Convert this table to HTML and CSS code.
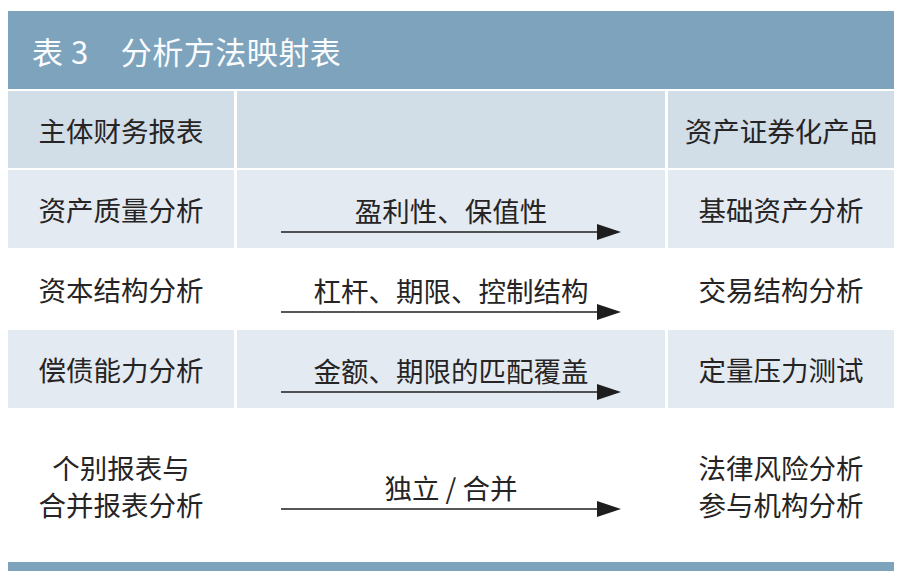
FILE: index.html
```html
<!DOCTYPE html>
<html lang="zh-CN">
<head>
<meta charset="utf-8">
<title>表 3 分析方法映射表</title>
<link rel="stylesheet" href="styles.css">
</head>
<body>
<div class="page">
  <div class="table">
    <div class="title"><span class="title-no">表 3</span><span class="title-name">分析方法映射表</span></div>

    <div class="row head">
      <div class="cell side">主体财务报表</div>
      <div class="cell mid"></div>
      <div class="cell side">资产证券化产品</div>
    </div>

    <div class="row tint">
      <div class="cell side">资产质量分析</div>
      <div class="cell mid">
        <span class="label">盈利性、保值性</span>
        <svg class="arrow" width="340" height="16" viewBox="0 0 340 16"><line x1="0" y1="8" x2="318" y2="8" stroke="#1e1e1e" stroke-width="1.5"/><polygon points="316,0 340,8 316,16" fill="#1e1e1e"/></svg>
      </div>
      <div class="cell side">基础资产分析</div>
    </div>

    <div class="row">
      <div class="cell side">资本结构分析</div>
      <div class="cell mid">
        <span class="label">杠杆、期限、控制结构</span>
        <svg class="arrow" width="340" height="16" viewBox="0 0 340 16"><line x1="0" y1="8" x2="318" y2="8" stroke="#1e1e1e" stroke-width="1.5"/><polygon points="316,0 340,8 316,16" fill="#1e1e1e"/></svg>
      </div>
      <div class="cell side">交易结构分析</div>
    </div>

    <div class="row tint">
      <div class="cell side">偿债能力分析</div>
      <div class="cell mid">
        <span class="label">金额、期限的匹配覆盖</span>
        <svg class="arrow" width="340" height="16" viewBox="0 0 340 16"><line x1="0" y1="8" x2="318" y2="8" stroke="#1e1e1e" stroke-width="1.5"/><polygon points="316,0 340,8 316,16" fill="#1e1e1e"/></svg>
      </div>
      <div class="cell side">定量压力测试</div>
    </div>

    <div class="row tall">
      <div class="cell side two"><span class="line">个别报表与</span><span class="line">合并报表分析</span></div>
      <div class="cell mid">
        <span class="label">独立 / 合并</span>
        <svg class="arrow" width="340" height="16" viewBox="0 0 340 16"><line x1="0" y1="8" x2="318" y2="8" stroke="#1e1e1e" stroke-width="1.5"/><polygon points="316,0 340,8 316,16" fill="#1e1e1e"/></svg>
      </div>
      <div class="cell side two"><span class="line">法律风险分析</span><span class="line">参与机构分析</span></div>
    </div>

    <div class="footer-bar"></div>
  </div>
</div>
</body>
</html>
```

FILE: styles.css
```css
html, body {
  margin: 0;
  padding: 0;
  background: #ffffff;
}

.page {
  padding: 11px 14px 0 8px;
  font-family: "Noto Sans CJK SC", "Noto Sans", "Liberation Sans", sans-serif;
  color: #262424;
}

.table {
  width: 886px;
  display: flex;
  flex-direction: column;
}

.title {
  height: 78px;
  background: #7ea3bd;
  color: #fbfcfd;
  display: flex;
  align-items: center;
  padding-left: 24px;
  font-size: 31px;
  letter-spacing: 0.5px;
  margin-bottom: 2px;
}

.title-name {
  margin-left: 32px;
}

.row {
  display: grid;
  grid-template-columns: 226px 428px 226px;
  column-gap: 3px;
  height: 78px;
  margin-bottom: 2px;
}

.row.head {
  height: 77px;
}

.row.head .cell {
  background: #d1dde7;
}

.row.tint .cell {
  background: #e4eaf1;
}

.row.tall {
  height: 152px;
  margin-bottom: 0;
}

.cell {
  display: flex;
  align-items: center;
  justify-content: center;
  text-align: center;
  font-size: 27.5px;
  line-height: 36px;
}

.cell.two {
  flex-direction: column;
}

.line {
  display: block;
  line-height: 37px;
}

.cell.mid {
  flex-direction: column;
  padding-top: 17px;
  box-sizing: border-box;
}

.label {
  display: block;
  line-height: 30px;
}

.arrow {
  display: block;
  margin-top: -1px;
}

.footer-bar {
  height: 9px;
  background: #7ea3bd;
}
```
